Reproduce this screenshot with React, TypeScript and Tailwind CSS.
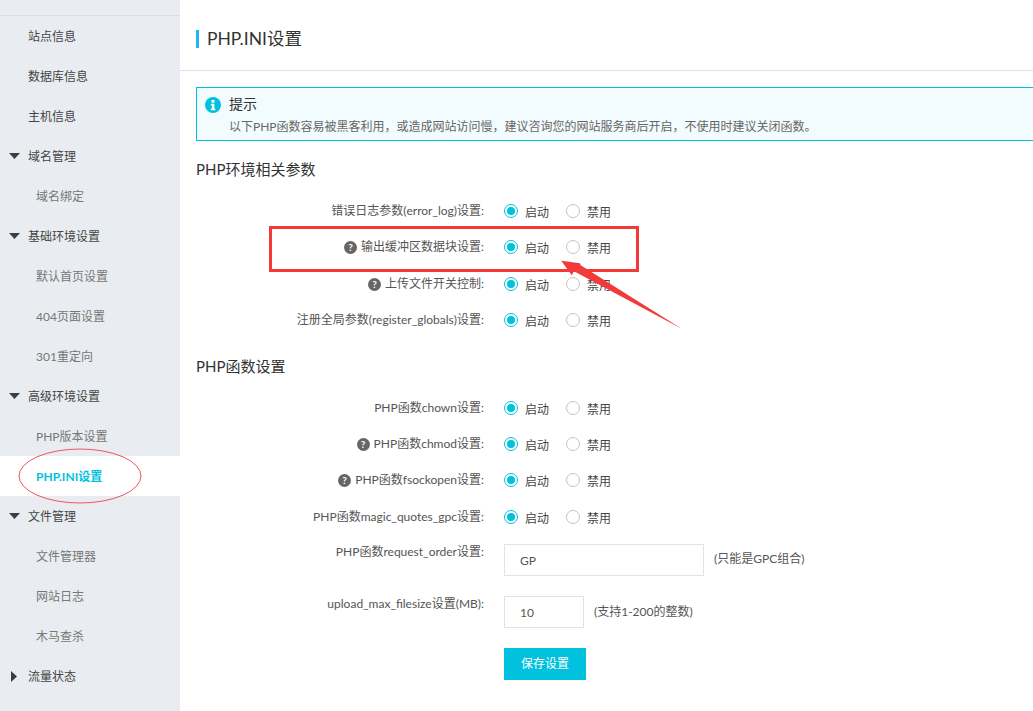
import React from 'react';

const font = { fontFamily: 'Lato, "Noto Sans CJK SC", sans-serif' };

const Caret = ({ open }: { open: boolean }) =>
  open ? (
    <svg width="11" height="6" viewBox="0 0 11 6" className="absolute left-[9px] top-[17px]">
      <path d="M0 0h11L5.5 6z" fill="#3a3d42" />
    </svg>
  ) : (
    <svg width="6" height="11" viewBox="0 0 6 11" className="absolute left-[11px] top-[15px]">
      <path d="M0 0l6 5.5L0 11z" fill="#3a3d42" />
    </svg>
  );

const Group = ({ label, open = true }: { label: string; open?: boolean }) => (
  <div className="relative flex h-10 items-center pt-[2px] pl-7 text-xs text-[#444]">
    <Caret open={open} />
    {label}
  </div>
);

const Item = ({ label, top = false }: { label: string; top?: boolean }) => (
  <div className={`flex h-10 items-center pt-[2px] text-xs ${top ? 'pl-7 text-[#444]' : 'pl-9 text-[#777]'}`}>{label}</div>
);

const Help = () => (
  <span className="mr-1 inline-flex h-[13px] w-[13px] shrink-0 items-center justify-center rounded-full bg-[#666] text-[10px] leading-none font-bold text-white">
    ?
  </span>
);

const Radio = ({ on = false, label }: { on?: boolean; label: string }) => (
  <div className="flex items-center">
    <span
      className={`flex h-[14px] w-[14px] items-center justify-center rounded-full border bg-white ${
        on ? 'border-[#00c1de]' : 'border-[#c4c4c4]'
      }`}
    >
      {on && <span className="h-2 w-2 rounded-full bg-[#00c1de]" />}
    </span>
    <span className="mt-[3px] ml-[7px] text-xs text-[#444]">{label}</span>
  </div>
);

const Row = ({ label, help = false, className = '' }: { label: string; help?: boolean; className?: string }) => (
  <div className={`flex h-5 items-center ${className}`}>
    <div className="flex w-[288px] items-center justify-end text-xs text-[#555]">
      {help && <Help />}
      {label}
    </div>
    <div className="ml-5 flex">
      <div className="w-[62px]">
        <Radio on label="启动" />
      </div>
      <Radio label="禁用" />
    </div>
  </div>
);

const Annotations = () => (
  <>
    <div className="pointer-events-none absolute left-[269px] top-[226px] h-[46px] w-[370px] border-[3px] border-[#f23a3a]" />
    <svg className="pointer-events-none absolute left-[555px] top-[255px]" width="132" height="80" viewBox="0 0 132 80">
      <path d="M6.3 5.7L25 8.3L25.7 10.3L126.7 73.7L19 16.3L16.7 20.3Z" fill="#f23a3a" />
    </svg>
    <svg className="pointer-events-none absolute left-[17px] top-[447px]" width="126" height="58" viewBox="0 0 126 58">
      <ellipse cx="63" cy="29" rx="61" ry="27" fill="none" stroke="#f0565f" strokeWidth="1" />
    </svg>
  </>
);

export default function App() {
  return (
    <div className="relative flex h-[711px] w-[1033px] overflow-hidden bg-white" style={font}>
      <aside className="h-full w-[180px] shrink-0 bg-[#e9ecf1]">
        <div className="h-4 border-b border-[#d9dce1]" />
        <Item top label="站点信息" />
        <Item top label="数据库信息" />
        <Item top label="主机信息" />
        <Group label="域名管理" />
        <Item label="域名绑定" />
        <Group label="基础环境设置" />
        <Item label="默认首页设置" />
        <Item label="404页面设置" />
        <Item label="301重定向" />
        <Group label="高级环境设置" />
        <Item label="PHP版本设置" />
        <div className="flex h-10 items-center bg-white pt-[2px] pl-9 text-xs font-bold text-[#00c1de]">PHP.INI设置</div>
        <Group label="文件管理" />
        <Item label="文件管理器" />
        <Item label="网站日志" />
        <Item label="木马查杀" />
        <Group label="流量状态" open={false} />
      </aside>

      <main className="min-w-0 flex-1">
        <div className="flex h-[71px] items-center border-b border-[#e1e3e6] pt-2 pl-4">
          <span className="h-[18px] w-[3px] bg-[#1fb8ee]" />
          <h1 className="ml-2 text-[17.5px] text-[#333]">PHP.INI设置</h1>
        </div>

        <div className="pl-4">
          <div className="mt-4 flex h-[54px] w-[900px] border border-[#00c1de] bg-[#f2fbfe] pl-2">
            <svg width="16" height="16" viewBox="0 0 16 16" className="mt-[9px] shrink-0">
              <circle cx="8" cy="8" r="8" fill="#00c1de" />
              <rect x="6.6" y="3" width="2.8" height="2.6" fill="#fff" />
              <path d="M5.8 6.8h3.6v5h1v1.4H5.8v-1.4h1v-3.6h-1z" fill="#fff" />
            </svg>
            <div className="ml-2">
              <div className="mt-1.5 text-sm leading-5 text-[#333]">提示</div>
              <div className="mt-[3px] text-xs leading-5 whitespace-nowrap text-[#666]">
                以下PHP函数容易被黑客利用，或造成网站访问慢，建议咨询您的网站服务商后开启，不使用时建议关闭函数。
              </div>
            </div>
          </div>

          <h2 className="mt-4 text-[15px] leading-6 text-[#333]">PHP环境相关参数</h2>
          <Row className="mt-5" label="错误日志参数(error_log)设置:" />
          <Row className="mt-4" help label="输出缓冲区数据块设置:" />
          <Row className="mt-[17px]" help label="上传文件开关控制:" />
          <Row className="mt-4" label="注册全局参数(register_globals)设置:" />

          <h2 className="mt-6 text-[15px] leading-6 text-[#333]">PHP函数设置</h2>
          <Row className="mt-5" label="PHP函数chown设置:" />
          <Row className="mt-4" help label="PHP函数chmod设置:" />
          <Row className="mt-4" help label="PHP函数fsockopen设置:" />
          <Row className="mt-[17px]" label="PHP函数magic_quotes_gpc设置:" />

          <div className="mt-[17px] flex">
            <div className="w-[288px] text-right text-xs leading-4 text-[#555]">PHP函数request_order设置:</div>
            <input
              readOnly
              value="GP"
              className="ml-5 h-8 w-[200px] border border-[#e3e3e3] pl-[15px] text-xs text-[#555] outline-none"
            />
            <span className="ml-[10px] text-xs leading-[30px] text-[#555]">(只能是GPC组合)</span>
          </div>
          <div className="mt-5 flex">
            <div className="w-[288px] text-right text-xs leading-4 text-[#555]">upload_max_filesize设置(MB):</div>
            <input
              readOnly
              value="10"
              className="ml-5 h-8 w-[80px] border border-[#e3e3e3] pl-[15px] text-xs text-[#555] outline-none"
            />
            <span className="ml-[10px] text-xs leading-[32px] text-[#555]">(支持1-200的整数)</span>
          </div>
          <button className="mt-5 ml-[308px] h-8 w-[82px] bg-[#00c1de] text-xs text-white">保存设置</button>
        </div>
      </main>

      <Annotations />
    </div>
  );
}
